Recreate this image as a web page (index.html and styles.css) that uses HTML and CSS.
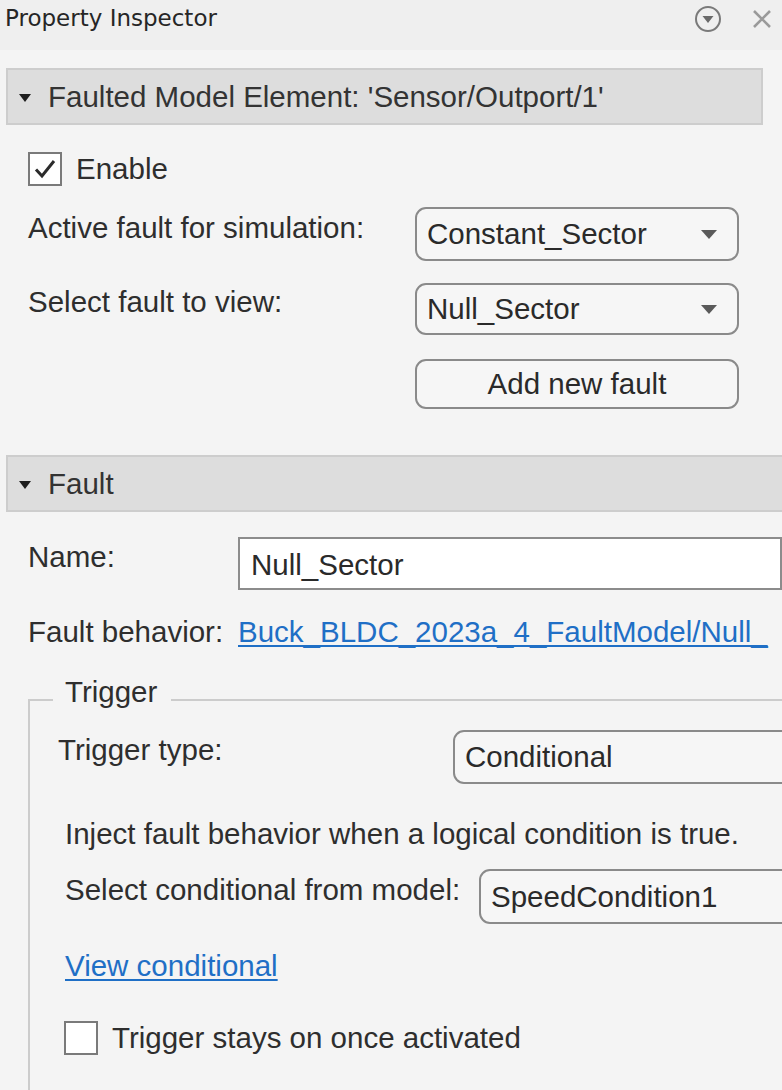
FILE: index.html
```html
<!DOCTYPE html>
<html>
<head>
<meta charset="utf-8">
<title>Property Inspector</title>
<link rel="stylesheet" href="styles.css">
</head>
<body>
<div class="panel">
  <div class="titlebar">
    <span class="title">Property Inspector</span>
    <div class="title-icons">
      <svg class="icon-menu" width="30" height="30" viewBox="0 0 30 30"><circle cx="15" cy="15" r="12" fill="none" stroke="#7a7a7a" stroke-width="2"/><path d="M9.5 12 L20.5 12 L15 19 Z" fill="#6a6a6a"/></svg>
      <svg class="icon-close" width="24" height="24" viewBox="0 0 24 24"><path d="M4 4 L20 20 M20 4 L4 20" stroke="#9a9a9a" stroke-width="2.6" fill="none"/></svg>
    </div>
  </div>

  <div class="section-head head-narrow">
    <span class="caret"></span>
    <span>Faulted Model Element: 'Sensor/Outport/1'</span>
  </div>
  <div class="section-body">
    <div class="check-row">
      <span class="checkbox"><svg width="30" height="30" viewBox="0 0 30 30"><path d="M6 15.5 L12 22 L24 7" fill="none" stroke="#2b2b2b" stroke-width="3"/></svg></span>
      <span class="check-label">Enable</span>
    </div>
    <div class="form-row row-active">
      <div class="label label-wide">Active fault for simulation:</div>
      <div class="dropdown dd-narrow"><span>Constant_Sector</span><span class="arrow"></span></div>
    </div>
    <div class="form-row row-select">
      <div class="label label-wide">Select fault to view:</div>
      <div class="dropdown dd-narrow dd-short"><span>Null_Sector</span><span class="arrow"></span></div>
    </div>
    <div class="button-row">
      <button class="btn">Add new fault</button>
    </div>
  </div>

  <div class="section-head head-wide">
    <span class="caret"></span>
    <span>Fault</span>
  </div>
  <div class="section-body">
    <div class="form-row row-name">
      <div class="label label-mid">Name:</div>
      <div class="textfield">Null_Sector</div>
    </div>
    <div class="form-row row-behavior">
      <div class="label label-mid">Fault behavior:</div>
      <a class="link" href="#">Buck_BLDC_2023a_4_FaultModel/Null_</a>
    </div>
    <fieldset class="trigger">
      <legend>Trigger</legend>
      <div class="form-row row-ttype">
        <div class="label label-ttype">Trigger type:</div>
        <div class="dropdown dd-wide"><span>Conditional</span></div>
      </div>
      <p class="desc">Inject fault behavior when a logical condition is true.</p>
      <div class="form-row row-cond">
        <div class="label label-cond">Select conditional from model:</div>
        <div class="dropdown dd-wide dd-cond"><span>SpeedCondition1</span></div>
      </div>
      <a class="link link-view" href="#">View conditional</a>
      <div class="check-row check-stay">
        <span class="checkbox"></span>
        <span class="check-label">Trigger stays on once activated</span>
      </div>
    </fieldset>
  </div>
</div>
</body>
</html>
```

FILE: styles.css
```css
html, body {
  margin: 0;
  padding: 0;
}
body {
  background: #f4f4f4;
  font-family: "Liberation Sans", Arial, sans-serif;
  font-size: 29.5px;
  color: #2e2e2e;
  overflow: hidden;
  width: 782px;
  height: 1090px;
}
.panel {
  width: 782px;
  white-space: nowrap;
}

/* title bar */
.titlebar {
  height: 50px;
  background: #efefef;
  display: flex;
  align-items: flex-start;
  justify-content: space-between;
}
.title {
  font-family: "DejaVu Sans", sans-serif;
  font-size: 23px;
  line-height: 37px;
  padding-left: 5px;
  color: #262626;
}
.title-icons {
  display: flex;
  align-items: center;
  height: 38px;
  gap: 27px;
  padding-right: 8px;
}

/* section header */
.section-head {
  margin-top: 18px;
  margin-left: 6px;
  height: 53px;
  background: #dddddd;
  border: 2px solid #cdcdcd;
  display: flex;
  align-items: center;
  color: #333;
}
.head-narrow { width: 753px; }
.head-wide { width: 820px; margin-top: 46px; }
.caret {
  width: 0;
  height: 0;
  border-left: 6px solid transparent;
  border-right: 6px solid transparent;
  border-top: 8px solid #1e1e1e;
  margin-left: 11px;
  margin-right: 17px;
  margin-top: 2px;
}

.section-body {
  padding-left: 28px;
}

/* checkbox rows */
.check-row {
  display: flex;
  align-items: center;
  height: 34px;
  margin-top: 27px;
}
.checkbox {
  box-sizing: border-box;
  width: 34px;
  height: 34px;
  border: 2px solid #7a7a7a;
  background: #ffffff;
  display: flex;
  align-items: center;
  justify-content: center;
}
.check-label {
  margin-left: 14px;
  line-height: 34px;
}

/* form rows */
.form-row {
  display: flex;
  align-items: flex-start;
}
.label {
  line-height: 34px;
  flex: none;
}
.label-wide { width: 387px; }
.label-mid { width: 210px; }
.row-active { margin-top: 21px; }
.row-active .label { padding-top: 4px; }
.row-select { margin-top: 22px; }
.row-select .label { padding-top: 2px; }

.dropdown {
  box-sizing: border-box;
  height: 54px;
  border: 2px solid #8a8a8a;
  border-radius: 11px;
  background: #f6f6f6;
  display: flex;
  align-items: center;
  justify-content: space-between;
  padding-left: 10px;
  padding-right: 20px;
  color: #2a2a2a;
}
.dd-narrow { width: 324px; }
.dd-short { height: 52px; }
.arrow {
  width: 0;
  height: 0;
  border-left: 8px solid transparent;
  border-right: 8px solid transparent;
  border-top: 9px solid #5a5a5a;
}

.button-row {
  margin-top: 24px;
  padding-left: 387px;
}
.btn {
  box-sizing: border-box;
  width: 324px;
  height: 50px;
  border: 2px solid #8a8a8a;
  border-radius: 11px;
  background: #f6f6f6;
  font-family: inherit;
  font-size: 29.5px;
  color: #2a2a2a;
  padding: 0;
}

/* fault section */
.row-name { margin-top: 25px; }
.row-name .label { padding-top: 3px; }
.textfield {
  box-sizing: border-box;
  width: 600px;
  height: 53px;
  border: 2px solid #8c8c8c;
  background: #ffffff;
  padding-left: 11px;
  line-height: 51px;
  color: #2a2a2a;
}
.row-behavior {
  margin-top: 25px;
  line-height: 34px;
}
.link {
  color: #1f6fc6;
  text-decoration: underline;
  text-decoration-thickness: 2px;
  text-underline-offset: 3px;
  line-height: 34px;
}

/* trigger fieldset */
.trigger {
  margin: 26px 0 0 0;
  width: 820px;
  height: 500px;
  border: 2px solid #cccccc;
  padding: 5px 0 0 28px;
  min-width: 0;
}
.trigger legend {
  font-size: 29.5px;
  line-height: 34px;
  padding: 0 14px 16px 12px;
  margin-left: -5px;
  color: #2e2e2e;
}
.label-ttype {
  width: 395px;
  padding-top: 3px;
}
.dd-wide {
  width: 400px;
  padding-left: 10px;
}
.desc {
  margin: 33px 0 0 7px;
  line-height: 34px;
}
.row-cond {
  margin-top: 18px;
  margin-left: 7px;
}
.label-cond {
  width: 414px;
  padding-top: 4px;
}
.dd-cond { height: 55px; }
.link-view {
  display: inline-block;
  margin-top: 25px;
  margin-left: 7px;
}
.check-stay {
  margin-top: 38px;
  margin-left: 6px;
}
```
